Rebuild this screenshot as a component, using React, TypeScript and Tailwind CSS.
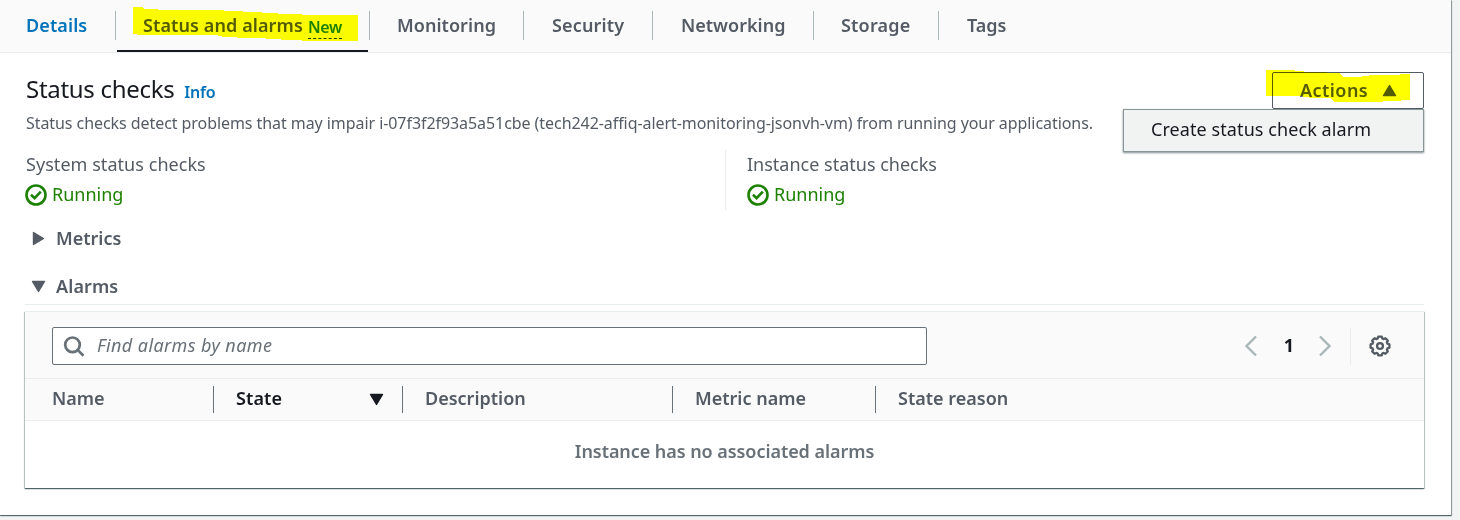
import type { ReactNode } from 'react';

function Caret({ dir, className }: { dir: 'up' | 'down' | 'right'; className?: string }) {
  const d = {
    up: 'M7.5 1.5 13.5 11.5H1.5Z',
    down: 'M1.5 1.5H13.5L7.5 11.5Z',
    right: 'M1.5 1.5 11.5 7.5 1.5 13.5Z',
  }[dir];
  return (
    <svg
      width={dir === 'right' ? 13 : 15}
      height={dir === 'right' ? 15 : 13}
      className={className}
      fill="currentColor"
      stroke="currentColor"
      strokeWidth="1.4"
      strokeLinejoin="round"
    >
      <path d={d} />
    </svg>
  );
}

function Tab({ children, className }: { children: ReactNode; className: string }) {
  return (
    <div className={`flex h-[52px] shrink-0 items-center pb-[2px] ${className}`}>
      {children}
    </div>
  );
}

function TabDivider() {
  return <div className="mt-[11px] h-[29px] w-px shrink-0 bg-[#aab7b8]" />;
}

function Running() {
  return (
    <div className="flex h-[31px] items-center text-[#1d8102]">
      <svg width="22" height="22" viewBox="0 0 22 22" fill="none" stroke="currentColor" strokeWidth="2.6">
        <circle cx="11" cy="11" r="9.5" />
        <path d="M6 10.8 9.6 14.2 15.8 7.6" />
      </svg>
      <span className="mb-px ml-[5px]">Running</span>
    </div>
  );
}

function Column({ children, className }: { children: ReactNode; className: string }) {
  return <div className={`flex h-[27px] shrink-0 items-center ${className}`}>{children}</div>;
}

export default function App() {
  return (
    <div className="h-[520px] w-[1460px] overflow-hidden bg-[#f2f3f3] font-['Noto_Sans','Open_Sans',sans-serif] text-[18px] leading-[26px] text-[#545b64]">
      <div className="relative h-[515px] w-[1451px] bg-white shadow-[0_1px_1px_0_rgba(0,28,36,0.45),1px_1px_1px_0_rgba(0,28,36,0.25),0_0_0_1px_rgba(0,28,36,0.15)]">
        <nav className="flex h-[53px] border-b border-[#eaeded] bg-[#fafafa] font-semibold">
          <Tab className="w-[115px] pl-[26px] tracking-[0.1px] text-[#0073bb]">Details</Tab>
          <TabDivider />
          <div className="flex w-[253px] shrink-0 px-px">
            <div className="flex h-[52px] flex-1 items-center border-b-2 border-[#16191f] pl-[26px]">
              <span className="tracking-[0.1px]">Status and alarms</span>
              <span className="ml-[5px] mt-[5px] border-b border-dashed border-[#1d4102] text-[16px] leading-[21px] tracking-[-0.3px] text-[#1d8102]">
                New
              </span>
            </div>
          </div>
          <TabDivider />
          <Tab className="w-[153px] pl-[27px] tracking-[0.05px]">Monitoring</Tab>
          <TabDivider />
          <Tab className="w-[128px] pl-[28px] tracking-[0.15px]">Security</Tab>
          <TabDivider />
          <Tab className="w-[160px] pl-[28px]">Networking</Tab>
          <TabDivider />
          <Tab className="w-[124px] pl-[27px] tracking-[0.2px]">Storage</Tab>
          <TabDivider />
          <Tab className="w-[100px] pl-[28px]">Tags</Tab>
        </nav>

        <section className="flex h-[97px] justify-between pl-[25px] pr-[27px]">
          <div>
            <div className="flex items-baseline pl-px pt-[19px]">
              <h1 className="text-[24px] leading-[34px] tracking-[-0.3px] text-[#16191f]">Status checks</h1>
              <span className="ml-[10px] text-[16px] font-semibold tracking-[-0.2px] text-[#0073bb]">Info</span>
            </div>
            <p className="mt-[4px] whitespace-nowrap pl-px text-[16px] tracking-[-0.066px]">
              Status checks detect problems that may impair i-07f3f2f93a5a51cbe
              (tech242-affiq-alert-monitoring-jsonvh-vm) from running your applications.
            </p>
          </div>
          <div className="relative mt-[19px] h-[37px] w-[152px]">
            <button className="flex h-[37px] w-[152px] items-center rounded-[2px] border border-[#545b64] bg-white pl-[27px] font-semibold tracking-[0.45px]">
              <span className="mb-[2px]">Actions</span>
              <Caret dir="up" className="ml-[14px]" />
            </button>
            <div className="absolute right-0 top-[37px] flex h-[43px] w-[301px] items-center border border-[#879596] bg-[#f1f3f3] pb-[3px] pl-[27px] tracking-[0.08px] text-[#16191f] shadow-[0_1px_2px_0_rgba(0,28,36,0.5)]">
              Create status check alarm
            </div>
          </div>
        </section>

        <section className="flex h-[60px] pl-[25px]">
          <div className="w-[700px]">
            <div className="h-[29px] pl-px pt-px tracking-[0.05px]">System status checks</div>
            <Running />
          </div>
          <div className="border-l border-[#eaeded] pl-[21px]">
            <div className="h-[29px] pt-px">Instance status checks</div>
            <Running />
          </div>
        </section>

        <div className="ml-[32px] mt-[15px] flex h-[26px] items-center font-semibold">
          <Caret dir="right" />
          <span className="ml-[11px]">Metrics</span>
        </div>
        <div className="ml-[25px] mr-[27px] mt-[22px] flex h-[32px] items-start border-b border-[#eaeded] pl-[6px] font-semibold">
          <Caret dir="down" className="mt-[7px]" />
          <span className="ml-[10px] tracking-[0.1px]">Alarms</span>
        </div>

        <section className="ml-[25px] mr-[27px] mt-[6px] h-[177px] bg-white shadow-[0_1px_1px_0_rgba(0,28,36,0.5),1px_1px_1px_0_rgba(0,28,36,0.2),-1px_1px_1px_0_rgba(0,28,36,0.2)]">
          <div className="flex h-[68px] items-center border-b border-t border-[#eaeded] bg-[#fafafa] pl-[27px] pt-[2px]">
            <div className="flex h-[38px] w-[875px] items-center rounded-[2px] border border-[#687078] bg-white pl-[10px] text-[#687078]">
              <svg width="23" height="23" viewBox="0 0 23 23" fill="none" stroke="currentColor" strokeWidth="2.7">
                <circle cx="9.5" cy="9.8" r="7.3" />
                <path d="m14.8 15.1 5.7 5.7" />
              </svg>
              <span className="mb-[2px] ml-[11px] italic tracking-[0.4px]">Find alarms by name</span>
            </div>
            <svg width="14" height="22" className="ml-[317px] text-[#aab7b8]" fill="none" stroke="currentColor" strokeWidth="2.4">
              <path d="M12 1.5 2.5 11 12 20.5" />
            </svg>
            <span className="mb-[2px] w-[60px] pl-[2px] text-center font-bold text-[#16191f]">1</span>
            <svg width="14" height="22" className="text-[#aab7b8]" fill="none" stroke="currentColor" strokeWidth="2.4">
              <path d="M2 1.5 11.5 11 2 20.5" />
            </svg>
            <div className="ml-[18px] h-[37px] w-px bg-[#eaeded]" />
            <svg width="22" height="22" viewBox="-11 -11 22 22" className="ml-[18px]" fill="none" stroke="#545b64">
              <path
                strokeWidth="2.3"
                strokeLinejoin="round"
                d="M9.4-1.7V1.7L7.5 2.3 6.9 3.7 7.8 5.4 5.4 7.8 3.7 6.9 2.3 7.5 1.7 9.4H-1.7L-2.3 7.5-3.7 6.9-5.4 7.8-7.8 5.4-6.9 3.7-7.5 2.3-9.4 1.7V-1.7L-7.5-2.3-6.9-3.7-7.8-5.4-5.4-7.8-3.7-6.9-2.3-7.5-1.7-9.4H1.7L2.3-7.5 3.7-6.9 5.4-7.8 7.8-5.4 6.9-3.7 7.5-2.3Z"
              />
              <circle r="2.9" strokeWidth="2.4" />
            </svg>
          </div>
          <div className="flex h-[42px] items-center border-b border-[#eaeded] bg-[#fafafa] font-semibold">
            <Column className="w-[188px] pb-[3px] pl-[27px]">Name</Column>
            <Column className="w-[189px] justify-between border-l border-[#687078] pl-[22px] pr-[18px] text-[#16191f]">
              <span className="mb-[3px] tracking-[0.1px]">State</span>
              <Caret dir="down" className="mb-px" />
            </Column>
            <Column className="w-[270px] border-l border-[#687078] pb-[3px] pl-[22px]">Description</Column>
            <Column className="w-[203px] border-l border-[#687078] pb-[3px] pl-[22px]">Metric name</Column>
            <Column className="w-[400px] border-l border-[#687078] pb-[3px] pl-[22px]">State reason</Column>
          </div>
          <div className="flex h-[62px] items-center justify-center pb-[2px] font-semibold tracking-[-0.06px] text-[#687078]">
            Instance has no associated alarms
          </div>
        </section>

        {/* Highlighter strokes over the active tab and the Actions button */}
        <svg
          width="1451"
          height="110"
          className="pointer-events-none absolute left-0 top-0 mix-blend-multiply"
          fill="#ffff00"
          shapeRendering="crispEdges"
        >
          <path d="M133 7H142L144 9 172 10H224V11L262 12 262 13 294 14 310 15H345V14.7H358V41H302V40H281V39L222 37V36L214 35H137V34H133Z" />
          <path d="M1266 70H1295V71L1313 72 1340 73 1343 77H1362V76L1375 75H1398L1402 74H1410V100L1392 101 1374 102H1335L1330 98H1312L1300 96H1266Z" />
        </svg>
      </div>
    </div>
  );
}
